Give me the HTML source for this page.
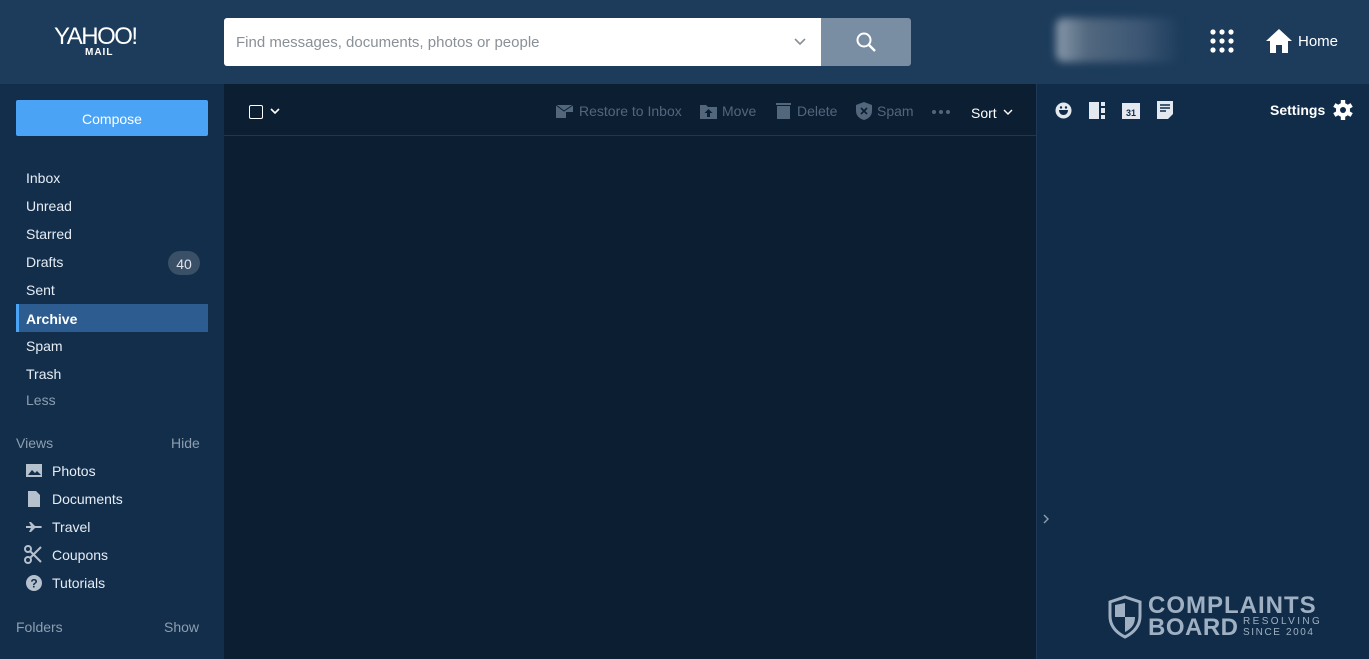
<!DOCTYPE html>
<html><head><style>
*{box-sizing:border-box;margin:0;padding:0}
body{width:1369px;height:659px;overflow:hidden;font-family:"Liberation Sans",sans-serif;background:#0d1f33;position:relative}
.hdr{position:absolute;left:0;top:0;width:1369px;height:84px;background:#1d3c5c}
.side{position:absolute;left:0;top:84px;width:224px;height:575px;background:#132e4b}
.main{position:absolute;left:224px;top:84px;width:812px;height:575px;background:#0c1e32}
.right{position:absolute;left:1036px;top:84px;width:333px;height:575px;background:#112c48;border-left:1px solid #1e3a58}
.t{position:absolute;white-space:nowrap}
.nav{position:absolute;left:26px;font-size:14px;color:#e6edf5}
.v{position:absolute;left:52px;font-size:14px;color:#e6edf5}
.ic{position:absolute;left:25px;fill:#b5c1cd}
.tb{position:absolute;top:103px;font-size:14px;color:#53677c}
</style></head><body>
<div class="hdr"></div>
<div class="side"></div>
<div class="main"></div>
<div class="right"></div>
<div class="t" style="left:54px;top:23px;font-size:24px;color:#fff;letter-spacing:-1.5px;font-weight:300">YAHOO!</div>
<div class="t" style="left:85px;top:47px;font-size:10px;color:#fff;font-weight:bold;letter-spacing:1px">MAIL</div>
<div style="position:absolute;left:224px;top:18px;width:597px;height:48px;background:#fff;border-radius:3px 0 0 3px"></div>
<div class="t" style="left:236px;top:34px;font-size:15px;color:#8a9097">Find messages, documents, photos or people</div>
<svg style="position:absolute;left:793px;top:36px" width="14" height="12"><path d="M2 3l5 5 5-5" stroke="#8a9097" stroke-width="1.6" fill="none"/></svg>
<div style="position:absolute;left:821px;top:18px;width:90px;height:48px;background:#7a8ea3;border-radius:0 3px 3px 0"></div>
<svg style="position:absolute;left:855px;top:31px" width="22" height="22"><circle cx="9" cy="9" r="6.5" stroke="#fff" stroke-width="2" fill="none"/><path d="M14 14l6 6" stroke="#fff" stroke-width="2.4"/></svg>
<div style="position:absolute;left:1056px;top:18px;width:124px;height:44px;background:linear-gradient(90deg,#8898aa 0,#52687f 25%,#3a5573 70%,#1d3c5c);filter:blur(4px);border-radius:8px"></div>
<svg style="position:absolute;left:1210px;top:29px" width="26" height="26" fill="#fff"><circle cx="3" cy="3" r="2.6"/><circle cx="12" cy="3" r="2.6"/><circle cx="21" cy="3" r="2.6"/><circle cx="3" cy="12" r="2.6"/><circle cx="12" cy="12" r="2.6"/><circle cx="21" cy="12" r="2.6"/><circle cx="3" cy="21" r="2.6"/><circle cx="12" cy="21" r="2.6"/><circle cx="21" cy="21" r="2.6"/></svg>
<svg style="position:absolute;left:1266px;top:28px" width="26" height="26" fill="#fff"><path d="M13 1L0 13h4v12h6v-8h6v8h6V13h4z"/></svg>
<div class="t" style="left:1298px;top:33px;font-size:15px;color:#fff">Home</div>

<div style="position:absolute;left:16px;top:100px;width:192px;height:36px;background:#4aa3f5;border-radius:2px"></div>
<div class="t" style="left:16px;top:111px;width:192px;text-align:center;font-size:14px;color:#fff">Compose</div>
<div class="nav" style="top:170px">Inbox</div>
<div class="nav" style="top:198px">Unread</div>
<div class="nav" style="top:226px">Starred</div>
<div class="nav" style="top:254px">Drafts</div>
<div style="position:absolute;left:168px;top:251px;width:32px;height:24px;border-radius:12px;background:#3a5066"></div>
<div class="t" style="left:168px;top:256px;width:32px;text-align:center;font-size:14px;color:#dfe6ee">40</div>
<div class="nav" style="top:282px">Sent</div>
<div style="position:absolute;left:16px;top:304px;width:192px;height:28px;background:#2c5c90;border-left:3px solid #4aa3f5"></div>
<div class="nav" style="top:311px;font-weight:bold;color:#fff">Archive</div>
<div class="nav" style="top:338px">Spam</div>
<div class="nav" style="top:366px">Trash</div>
<div class="nav" style="top:392px;color:#8d9eb0">Less</div>
<div class="t" style="left:16px;top:435px;font-size:14px;color:#8d9eb0">Views</div>
<div class="t" style="left:171px;top:435px;font-size:14px;color:#8d9eb0">Hide</div>
<svg class="ic" style="top:463px" width="18" height="16"><rect x="1" y="1" width="16" height="13"/><path d="M3 12l4-5 3 3 2-2 4 4z" fill="#132e4b"/></svg>
<div class="v" style="top:463px">Photos</div>
<svg class="ic" style="top:491px" width="18" height="16"><path d="M3 0h8l4 4v12H3z"/></svg>
<div class="v" style="top:491px">Documents</div>
<svg class="ic" style="top:520px" width="18" height="14"><path d="M1 6h5l-2-4h2l4 4h6c1 0 1 2 0 2h-6l-4 4H4l2-4H1z"/></svg>
<div class="v" style="top:519px">Travel</div>
<svg style="position:absolute;left:24px;top:545px" width="19" height="19" stroke="#b5c1cd" stroke-width="2" fill="none"><circle cx="4" cy="4" r="3"/><circle cx="4" cy="15" r="3"/><path d="M6 6l11 11M6 13L17 2"/></svg>
<div class="v" style="top:547px">Coupons</div>
<svg class="ic" style="top:574px" width="18" height="18"><circle cx="9" cy="9" r="8"/><text x="9" y="13.5" font-size="12" font-weight="bold" text-anchor="middle" fill="#132e4b" font-family="Liberation Sans">?</text></svg>
<div class="v" style="top:575px">Tutorials</div>
<div class="t" style="left:16px;top:619px;font-size:14px;color:#8d9eb0">Folders</div>
<div class="t" style="left:164px;top:619px;font-size:14px;color:#8d9eb0">Show</div>

<div style="position:absolute;left:249px;top:105px;width:14px;height:14px;border:1.5px solid #fff;border-radius:2px"></div>
<svg style="position:absolute;left:270px;top:107px" width="10" height="8"><path d="M1 2l4 4 4-4" stroke="#fff" stroke-width="1.6" fill="none"/></svg>
<svg style="position:absolute;left:556px;top:104px" width="18" height="15" fill="#53677c"><path d="M0 1h17v7h-7v6H0z"/><path d="M0 1l8 6 9-6" stroke="#0c1e32" fill="none"/></svg>
<div class="tb" style="left:579px">Restore to Inbox</div>
<svg style="position:absolute;left:700px;top:103px" width="17" height="16" fill="#53677c"><path d="M0 2h6l2 2h9v12H0z"/><path d="M8.5 6l4 4h-2.5v4h-3v-4H4.5z" fill="#0c1e32"/></svg>
<div class="tb" style="left:722px">Move</div>
<svg style="position:absolute;left:776px;top:102px" width="15" height="17" fill="#53677c"><rect x="0" y="1" width="15" height="2"/><rect x="1" y="4" width="13" height="13"/></svg>
<div class="tb" style="left:797px">Delete</div>
<svg style="position:absolute;left:855px;top:102px" width="18" height="18" fill="#53677c"><path d="M9 0l8 3v6c0 5-4 8-8 9-4-1-8-4-8-9V3z"/><path d="M6 6l6 6M12 6l-6 6" stroke="#0c1e32" stroke-width="1.6"/></svg>
<div class="tb" style="left:877px">Spam</div>
<svg style="position:absolute;left:931px;top:109px" width="20" height="6" fill="#53677c"><circle cx="3" cy="3" r="2"/><circle cx="10" cy="3" r="2"/><circle cx="17" cy="3" r="2"/></svg>
<div class="t" style="left:971px;top:105px;font-size:14px;color:#fff">Sort</div>
<svg style="position:absolute;left:1003px;top:108px" width="10" height="8"><path d="M1 2l4 4 4-4" stroke="#fff" stroke-width="1.4" fill="none"/></svg>
<div style="position:absolute;left:224px;top:135px;width:812px;height:1px;background:#1f3850"></div>

<svg style="position:absolute;left:1055px;top:102px" width="17" height="17"><circle cx="8.5" cy="8.5" r="8" fill="#e3e9ef"/><path d="M4 8h9c0 3-2 5-4.5 5S4 11 4 8z" fill="#112c48"/><circle cx="6" cy="5.5" r="1.2" fill="#112c48"/><circle cx="11" cy="5.5" r="1.2" fill="#112c48"/></svg>
<svg style="position:absolute;left:1089px;top:102px" width="16" height="17" fill="#e3e9ef"><rect x="0" y="0" width="10" height="17"/><rect x="12" y="0" width="4" height="4"/><rect x="12" y="6" width="4" height="5"/><rect x="12" y="13" width="4" height="4"/></svg>
<svg style="position:absolute;left:1122px;top:101px" width="18" height="18"><rect x="0" y="2" width="18" height="16" fill="#e3e9ef"/><text x="9" y="15" font-size="9" font-weight="bold" text-anchor="middle" fill="#112c48" font-family="Liberation Sans">31</text></svg>
<svg style="position:absolute;left:1157px;top:101px" width="16" height="18" fill="#e3e9ef"><path d="M0 0h16v13l-5 5H0z"/><path d="M3 4h10M3 7h10M3 10h6" stroke="#112c48" stroke-width="1.5"/></svg>
<div class="t" style="left:1270px;top:102px;font-size:14px;color:#fff;font-weight:bold">Settings</div>
<svg style="position:absolute;left:1333px;top:100px" width="20" height="20"><g fill="#fff" transform="translate(10 10)"><circle r="7"/><rect x="-2.2" y="-10" width="4.4" height="20"/><rect x="-2.2" y="-10" width="4.4" height="20" transform="rotate(60)"/><rect x="-2.2" y="-10" width="4.4" height="20" transform="rotate(120)"/></g><circle cx="10" cy="10" r="3" fill="#112c48"/></svg>
<svg style="position:absolute;left:1042px;top:513px" width="8" height="12"><path d="M2 2l4 4-4 4" stroke="#8d9eb0" stroke-width="1.4" fill="none"/></svg>

<svg style="position:absolute;left:1107px;top:595px" width="36" height="44"><path d="M18 2l15 5v14c0 11-7 17-15 21C10 38 3 32 3 21V7z" fill="none" stroke="#9fb0c2" stroke-width="3"/><path d="M18 8V22H8V10zM18 22h10c0 8-4 12-10 15z" fill="#9fb0c2"/></svg>
<div class="t" style="left:1148px;top:592px;font-size:24px;font-weight:bold;color:#9fb0c2;letter-spacing:1px">COMPLAINTS</div>
<div class="t" style="left:1148px;top:614px;font-size:24px;font-weight:bold;color:#9fb0c2;letter-spacing:0.5px">BOARD</div>
<div class="t" style="left:1243px;top:616px;font-size:10px;color:#9fb0c2;letter-spacing:2.4px">RESOLVING</div>
<div class="t" style="left:1243px;top:627px;font-size:10px;color:#9fb0c2;letter-spacing:1.6px">SINCE 2004</div>
</body></html>
